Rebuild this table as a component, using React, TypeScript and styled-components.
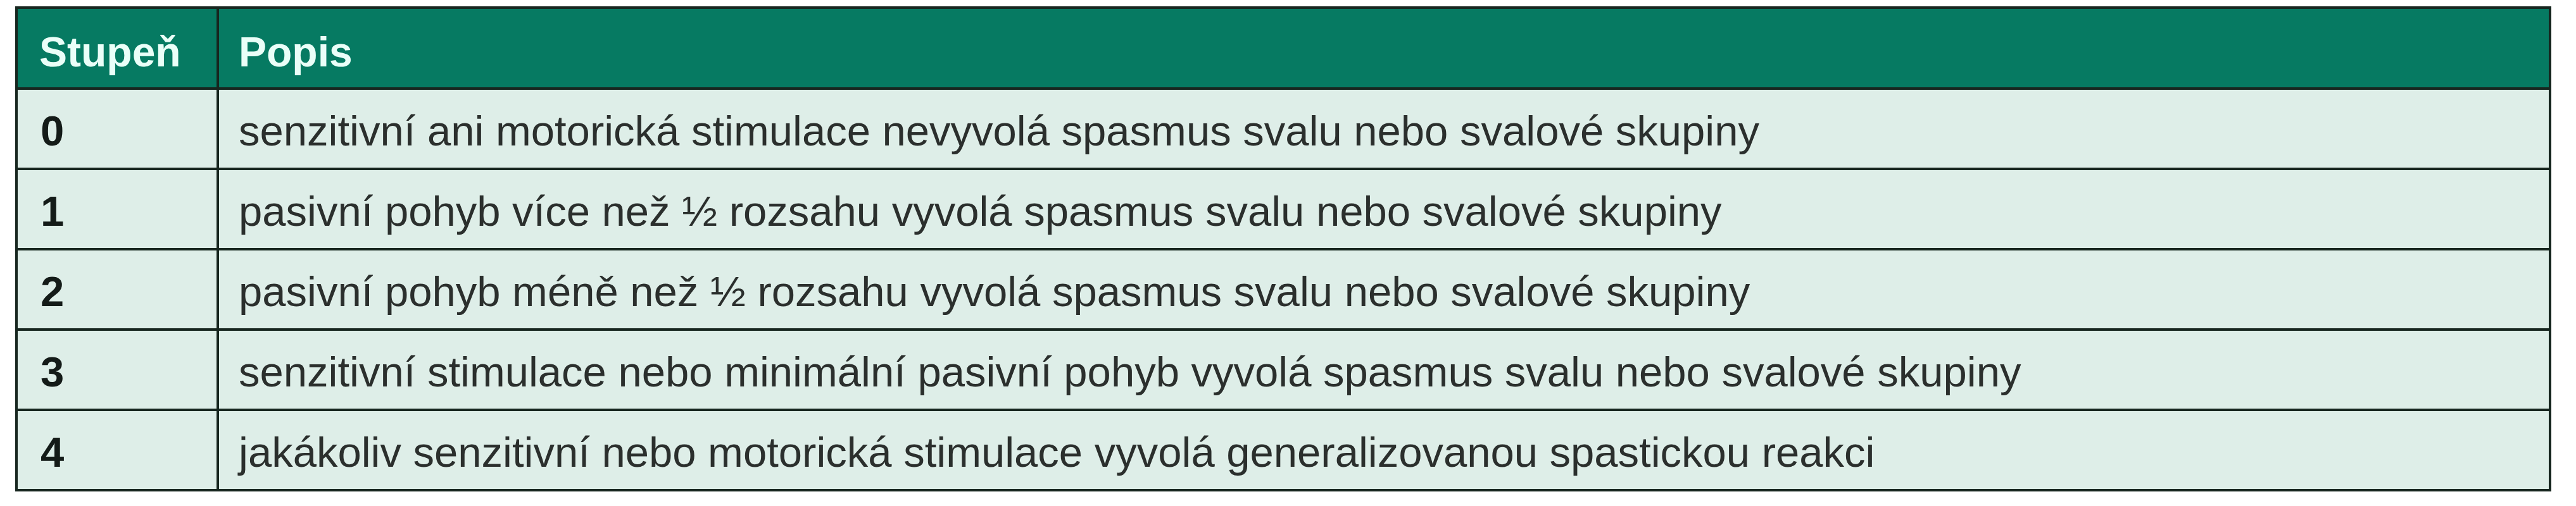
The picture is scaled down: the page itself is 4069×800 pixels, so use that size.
import { Fragment } from 'react';
import styled, { createGlobalStyle } from 'styled-components';

const rows = [
	{ grade: '0', text: 'senzitivní ani motorická stimulace nevyvolá spasmus svalu nebo svalové skupiny' },
	{ grade: '1', text: 'pasivní pohyb více než ½ rozsahu vyvolá spasmus svalu nebo svalové skupiny' },
	{ grade: '2', text: 'pasivní pohyb méně než ½ rozsahu vyvolá spasmus svalu nebo svalové skupiny' },
	{ grade: '3', text: 'senzitivní stimulace nebo minimální pasivní pohyb vyvolá spasmus svalu nebo svalové skupiny' },
	{ grade: '4', text: 'jakákoliv senzitivní nebo motorická stimulace vyvolá generalizovanou spastickou reakci' },
];

const GlobalStyle = createGlobalStyle`
	* {
		box-sizing: border-box;
	}
	body {
		margin: 0;
		background: #ffffff;
		font-family: 'Liberation Sans', Arial, sans-serif;
	}
`;

const StyledPage = styled.div`
	padding: 10px 0 0 24px;
`;

const StyledTable = styled.div`
	display: grid;
	grid-template-columns: 318px 3684px;
	grid-template-rows: 128px repeat(5, 127px);
	width: 4006px;
	border-left: 4px solid #17261f;
	border-top: 4px solid #17261f;
`;

const StyledHead = styled.div<{ $first?: boolean }>`
	display: flex;
	align-items: center;
	padding: 12px 0 0 ${({ $first }) => ($first ? '34px' : '31px')};
	background: #067a62;
	border-right: 4px solid #17261f;
	border-bottom: 4px solid #17261f;
	color: #eafff8;
	font-size: 66px;
	font-weight: 700;
	white-space: nowrap;
`;

const StyledCell = styled.div<{ $grade?: boolean }>`
	display: flex;
	align-items: center;
	padding: 6px 0 0 ${({ $grade }) => ($grade ? '36px' : '31px')};
	background: #deeee8;
	border-right: 4px solid #17261f;
	border-bottom: 4px solid #17261f;
	color: ${({ $grade }) => ($grade ? '#141b18' : '#2b2f2d')};
	font-size: 67px;
	font-weight: ${({ $grade }) => ($grade ? 700 : 400)};
	white-space: nowrap;
`;

const App = () => {
	return (
		<>
			<GlobalStyle />
			<StyledPage>
				<StyledTable>
					<StyledHead $first>Stupeň</StyledHead>
					<StyledHead>Popis</StyledHead>
					{rows.map((row) => (
						<Fragment key={row.grade}>
							<StyledCell $grade>{row.grade}</StyledCell>
							<StyledCell>{row.text}</StyledCell>
						</Fragment>
					))}
				</StyledTable>
			</StyledPage>
		</>
	);
};

export default App;
